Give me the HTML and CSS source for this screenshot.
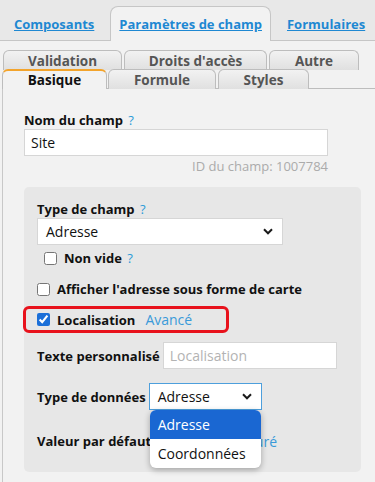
FILE: index.html
```html
<!DOCTYPE html>
<html>
<head>
<meta charset="utf-8">
<title>Paramètres de champ</title>
<link rel="stylesheet" href="styles.css">
</head>
<body>

<nav class="main-tabs">
	<a class="main-tab">Composants</a>
	<a class="main-tab active">Paramètres de champ</a>
	<a class="main-tab">Formulaires</a>
</nav>

<div class="tabs-body">
	<div class="sub-tabs">
		<div class="tab-row row-1">
			<span class="sub-tab tab-validation">Validation</span>
			<span class="sub-tab tab-droits">Droits d'accès</span>
			<span class="sub-tab tab-autre">Autre</span>
		</div>
		<div class="tab-row row-2">
			<span class="sub-tab tab-basique active">Basique</span>
			<span class="sub-tab tab-formule">Formule</span>
			<span class="sub-tab tab-styles">Styles</span>
		</div>
	</div>

	<div class="panel">
		<div class="field">
			<div class="label">Nom du champ <span class="help">?</span></div>
			<input class="text-input name-input" type="text" value="Site">
			<div class="field-id">ID du champ: 1007784</div>
		</div>

		<div class="box">
			<div class="label">Type de champ <span class="help">?</span></div>
			<div class="select type-select">
				<span>Adresse</span>
				<svg class="chevron" width="10" height="7" viewBox="0 0 10 7"><path d="M1 1.3l4 4 4-4" stroke="#1a1a1a" stroke-width="2" fill="none"/></svg>
			</div>

			<label class="check-row non-vide">
				<input type="checkbox">
				<span class="label">Non vide <span class="help">?</span></span>
			</label>

			<label class="check-row afficher">
				<input type="checkbox">
				<span class="label">Afficher l'adresse sous forme de carte</span>
			</label>

			<div class="check-row highlight">
				<input type="checkbox" checked>
				<span class="label">Localisation</span>
				<a class="link">Avancé</a>
			</div>

			<div class="inline-row texte-row">
				<span class="label">Texte personnalisé</span>
				<input class="text-input texte-input" type="text" placeholder="Localisation">
			</div>

			<div class="inline-row donnees-row">
				<span class="label">Type de données</span>
				<div class="select data-select focused">
					<span>Adresse</span>
					<svg class="chevron" width="10" height="7" viewBox="0 0 10 7"><path d="M1 1.3l4 4 4-4" stroke="#1a1a1a" stroke-width="2" fill="none"/></svg>
					<ul class="dropdown">
						<li class="selected">Adresse</li>
						<li>Coordonnées</li>
					</ul>
				</div>
			</div>

			<div class="inline-row valeur-row">
				<span class="label">Valeur par défaut</span>
				<a class="link">Non configuré</a>
			</div>
		</div>
	</div>
</div>

</body>
</html>
```

FILE: styles.css
```css
* {
	margin: 0;
	padding: 0;
	box-sizing: border-box;
}
body {
	width: 375px;
	height: 482px;
	overflow: hidden;
	background: #f2f2f2;
	color: #111;
	font-family: "Open Sans", "Liberation Sans", sans-serif;
	font-size: 14px;
}

/* main tabs */
.main-tabs {
	display: flex;
	align-items: flex-end;
	gap: 7px;
	height: 41px;
	padding-left: 5px;
	background: #e8e8e8;
	border-bottom: 1px solid #c6c6c6;
}
.main-tab {
	display: flex;
	align-items: center;
	height: 35px;
	margin-bottom: -1px;
	padding: 0 8px;
	border: 1px solid transparent;
	border-bottom: none;
	border-radius: 8px 8px 0 0;
	color: #1e88d2;
	font-size: 13px;
	font-weight: 700;
	text-decoration: underline;
	white-space: nowrap;
}
.main-tab.active {
	background: #f2f2f2;
	border-color: #c6c6c6;
}

/* sub tabs */
.tabs-body {
	margin-left: 2px;
}
.sub-tabs {
	padding-top: 9px;
	border-bottom: 1px solid #bdbdbd;
}
.tab-row {
	display: flex;
	gap: 2px;
}
.row-1 {
	padding-left: 1px;
}
.row-2 {
	margin-top: -1px;
	margin-bottom: -1px;
}
.sub-tab {
	display: flex;
	align-items: center;
	justify-content: center;
	height: 20px;
	border: 1px solid #bdbdbd;
	border-bottom: none;
	border-radius: 6px 6px 0 0;
	background: linear-gradient(#f2f2f2, #e0e0e0);
	color: #555;
	font-size: 13.5px;
	font-weight: 700;
	white-space: nowrap;
}
.sub-tab.active {
	position: relative;
	background: #f2f2f2;
	border-top: 2px solid #f3a42c;
	color: #111;
}
.tab-validation { width: 119px; }
.tab-droits { width: 143px; }
.tab-autre { width: 90px; }
.tab-basique { width: 105px; margin-right: -1px; }
.tab-formule { width: 108px; }
.tab-styles { width: 91px; }

/* panel */
.panel {
	height: 393px;
	padding: 22px 14px 0 21px;
	border-left: 1px solid #c8c8c8;
}
.label {
	font-size: 13px;
	font-weight: 700;
	line-height: 18px;
	white-space: nowrap;
}
.help {
	margin-left: 2px;
	color: #2d9bd8;
	font-weight: 400;
}
.link {
	color: #3a9ad9;
	font-size: 13px;
}
.text-input {
	height: 27px;
	padding: 0 6px;
	border: 1px solid #d6d6d6;
	background: #fff;
	color: #111;
	font-family: inherit;
	font-size: 14px;
	outline: none;
}
.text-input::placeholder {
	color: #b3b3b3;
}
.name-input {
	display: block;
	width: 304px;
}
.field-id {
	width: 304px;
	margin-top: 1px;
	color: #ababab;
	font-size: 13px;
	line-height: 18px;
	text-align: right;
}

/* grey box */
.box {
	margin-top: 12px;
	padding: 13px 13px 18px;
	border-radius: 5px;
	background: #e7e7e7;
}
.select {
	position: relative;
	display: flex;
	align-items: center;
	justify-content: space-between;
	height: 27px;
	padding: 0 9px 0 8px;
	border: 1px solid #d6d6d6;
	background: #fff;
	font-size: 14px;
}
.type-select {
	width: 246px;
}
.data-select {
	width: 113px;
}
.select.focused {
	border-color: #4d9fdc;
}
.dropdown {
	position: absolute;
	top: 26px;
	left: 0;
	width: 111px;
	overflow: hidden;
	list-style: none;
	border-radius: 6px;
	background: #fff;
	box-shadow: 0 2px 6px rgba(0,0,0,0.3);
	z-index: 2;
}
.dropdown li {
	height: 29px;
	padding-left: 8px;
	line-height: 29px;
	font-size: 14px;
}
.dropdown li.selected {
	background: #1a67d2;
	color: #fff;
}

.check-row {
	display: flex;
	align-items: center;
	gap: 7px;
	height: 26px;
}
.check-row input {
	width: 13px;
	height: 13px;
	accent-color: #1b6fd8;
}
.non-vide {
	padding-left: 7px;
}
.afficher {
	margin-top: 5px;
}
.highlight {
	width: 206px;
	height: 27px;
	margin: 4px 0 0 -14px;
	padding-left: 11px;
	border: 3px solid #e8121c;
	border-radius: 6px;
}
.highlight .link {
	margin-left: 3px;
	font-size: 14px;
}

.inline-row {
	display: flex;
	align-items: center;
	gap: 3px;
	height: 27px;
}
.texte-row {
	margin-top: 9px;
}
.texte-input {
	width: 174px;
}
.donnees-row {
	margin-top: 14px;
}
.valeur-row {
	margin-top: 18px;
	height: 26px;
}
.valeur-row .link {
	margin-left: 30px;
	font-size: 14px;
}
```
